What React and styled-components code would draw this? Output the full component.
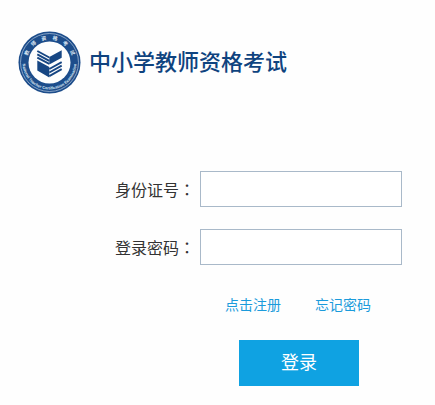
import styled, { createGlobalStyle } from 'styled-components'

const GlobalStyle = createGlobalStyle`
  * {
    box-sizing: border-box;
  }

  body {
    margin: 0;
    background-color: #fefefe;
    color: #333;
    font-family: 'Noto Sans CJK SC', sans-serif;
  }
`

const Page = styled.main`
  padding: 31px 33px 19px 18px;
`

const Header = styled.header`
  display: flex;
  align-items: center;
  column-gap: 8px;
`

const Title = styled.h1`
  margin: 0;
  padding-bottom: 6px;
  color: #0f437f;
  font-size: 22px;
  line-height: 32px;
  font-weight: 500;
`

const Form = styled.form`
  display: grid;
  grid-template-columns: auto 1fr;
  align-items: center;
  gap: 22px 5px;
  margin-top: 77px;
  padding-left: 97px;
`

const Label = styled.label`
  font-size: 16px;
  line-height: 24px;
`

/* the TC face centres the full-width colon in its box */
const Colon = styled.span`
  font-family: 'Noto Sans CJK TC', sans-serif;
`

const Input = styled.input`
  width: 100%;
  min-width: 0;
  height: 36px;
  padding: 0 8px;
  border: 1px solid #a9b9c9;
  border-radius: 0;
  background-color: #fff;
  font: inherit;
  font-size: 16px;
  outline: none;
`

const Actions = styled.div`
  grid-column: 2;
  display: flex;
  flex-direction: column;
  align-items: center;
  row-gap: 26px;
  padding: 7px 4px 0 0;
`

const Links = styled.nav`
  display: flex;
  column-gap: 34px;
  padding-right: 2px;
`

const Link = styled.a`
  color: #1b9bdb;
  font-size: 14px;
  line-height: 20px;
  text-decoration: none;
`

const Submit = styled.button`
  width: 120px;
  height: 46px;
  padding: 0 0 4px;
  border: 0;
  background-color: #0fa2e2;
  color: #fff;
  font: inherit;
  font-size: 18px;
  cursor: pointer;
`

const EmblemSvg = styled.svg`
  flex: none;
  width: 63px;
  height: 63px;

  text {
    fill: #dfe9f5;
    font-size: 5px;
    font-weight: 700;
    text-anchor: middle;
  }

  .english {
    font-family: 'Liberation Sans', sans-serif;
    font-size: 4px;
  }
`

const fields = [
  { id: 'idNumber', label: '身份证号', type: 'text' },
  { id: 'password', label: '登录密码', type: 'password' }
]

export default function App() {
  return (
    <Page>
      <GlobalStyle/>
      <Header>
        <Emblem/>
        <Title>中小学教师资格考试</Title>
      </Header>
      <Form onSubmit={e => e.preventDefault()}>
        {fields.map(({ id, label, type }) => (
          <Field key={id} id={id} label={label} type={type}/>
        ))}
        <Actions>
          <Links>
            <Link href='#register'>点击注册</Link>
            <Link href='#forgot'>忘记密码</Link>
          </Links>
          <Submit type='submit'>登录</Submit>
        </Actions>
      </Form>
    </Page>
  )
}

function Field({ id, label, type }) {
  return (
    <>
      <Label htmlFor={id}>{label}<Colon lang='zh-TW'>：</Colon></Label>
      <Input id={id} name={id} type={type}/>
    </>
  )
}

function Emblem() {
  const chars = [...'教师资格考试']

  return (
    <EmblemSvg viewBox='0 0 63 63' aria-hidden='true'>
      <defs>
        <path id='ringTop' d='M8.5 31.5a23 23 0 0 1 46 0'/>
        <path id='ringBottom' d='M4.5 31.5a27 27 0 0 0 54 0'/>
      </defs>
      <circle cx='31.5' cy='31.5' r='31' fill='#1d4d8b'/>
      <circle cx='31.5' cy='31.5' r='29' fill='none' stroke='#b4c8e0' strokeWidth='0.7'/>
      <circle cx='31.5' cy='31.5' r='21' fill='#fefefe'/>
      {chars.map((char, i) => (
        <text key={char}>
          <textPath href='#ringTop' startOffset={`${13 + i * 14.8}%`}>{char}</textPath>
        </text>
      ))}
      <text className='english'>
        <textPath href='#ringBottom' startOffset='50%'>National Teacher Certification Examination</textPath>
      </text>
      {/* open book: striped and solid pages on either side of the spine */}
      <path
        d='M19.3 29.5L31.3 36v10.500L19.300 39.500zM31.300 26L43.700 19.300v7.500L31.300 33.500z'
        fill='#174683'
      />
      <path
        d='M19.3 20l12 6.500M19.300 23.300l12 6.500M19.300 26.600l12 6.200M31.300 38l12.400-6.800M31.300 41.500l12.400-6.800M31.300 45.200l12.400-7'
        stroke='#174683'
        strokeWidth='1.9'
      />
    </EmblemSvg>
  )
}
